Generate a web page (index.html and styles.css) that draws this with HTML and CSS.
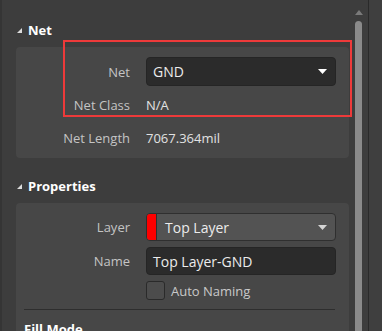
FILE: index.html
```html
<!DOCTYPE html>
<html lang="en">
<head>
  <meta charset="UTF-8">
  <title>Properties</title>
  <link rel="stylesheet" href="styles.css">
</head>
<body>

<div class="panel">
  <div class="main">
    <div class="section-head">
      <svg class="caret" width="5" height="5" viewBox="0 0 5 5"><polygon points="5,0 5,5 0,5"/></svg>
      <span>Net</span>
    </div>
    <div class="card">
      <div class="row">
        <label>Net</label>
        <div class="select dark">
          <span>GND</span>
          <svg class="arrow" width="9" height="5" viewBox="0 0 9 5"><polygon points="0,0 9,0 4.5,5"/></svg>
        </div>
      </div>
      <div class="row">
        <label>Net Class</label>
        <div class="value">N/A</div>
      </div>
      <div class="row">
        <label>Net Length</label>
        <div class="value">7067.364mil</div>
      </div>
    </div>

    <div class="section-head">
      <svg class="caret" width="5" height="5" viewBox="0 0 5 5"><polygon points="5,0 5,5 0,5"/></svg>
      <span>Properties</span>
    </div>
    <div class="card last">
      <div class="row">
        <label>Layer</label>
        <div class="select light">
          <span class="swatch"></span>
          <span class="layer-name">Top Layer</span>
          <svg class="arrow" width="9" height="5" viewBox="0 0 9 5"><polygon points="0,0 9,0 4.5,5"/></svg>
        </div>
      </div>
      <div class="row">
        <label>Name</label>
        <div class="input">Top Layer-GND</div>
      </div>
      <div class="row check-row">
        <label></label>
        <div class="check">
          <span class="box"></span>
          <span>Auto Naming</span>
        </div>
      </div>
      <div class="divider"></div>
      <div class="sub-head">Fill Mode</div>
    </div>
  </div>

  <div class="scroll">
    <svg class="up" width="8" height="5" viewBox="0 0 8 5"><polygon points="4,0 8,5 0,5"/></svg>
    <div class="thumb"></div>
  </div>
  <div class="edge"></div>

  <div class="highlight"></div>
</div>

</body>
</html>
```

FILE: styles.css
```css
* {
  box-sizing: border-box;
}

body {
  margin: 0;
  background: #3d3d3d;
  font-family: "Open Sans", "Noto Sans", sans-serif;
  font-size: 13px;
  color: #c9c9c9;
  overflow: hidden;
}

.panel {
  position: relative;
  display: flex;
  width: 382px;
  height: 331px;
  overflow: hidden;
  border-left: 2px solid #353535;
}

.main {
  width: 347px;
  padding: 20px 0 0 14px;
}

.section-head {
  display: flex;
  align-items: center;
  height: 20px;
  margin-bottom: 7px;
  padding-left: 1px;
  color: #ffffff;
  font-weight: bold;
  font-size: 13px;
}

.caret {
  fill: #dcdcdc;
  margin-right: 6px;
  margin-top: 1px;
}

.card {
  background: #474747;
  border-radius: 4px;
  padding: 10px 7px 6px 0;
  margin-bottom: 18px;
  display: flex;
  flex-direction: column;
  gap: 4px;
}

.card.last {
  margin-bottom: 0;
  padding-bottom: 20px;
  gap: 6px;
}

.row {
  display: grid;
  grid-template-columns: 114px 190px;
  column-gap: 16px;
  align-items: center;
  height: 29px;
}

.card.last .row {
  height: 28px;
}

.card.last .check-row {
  height: 19px;
}

.row label {
  text-align: right;
  color: #c4c4c4;
}

.value {
  color: #e2e2e2;
}

.select,
.input {
  display: flex;
  align-items: center;
  height: 100%;
  border-radius: 4px;
  border: 1px solid #252525;
  color: #ececec;
  font-size: 14px;
}

.select.dark,
.input {
  background: #2b2b2b;
  padding-left: 6px;
}

.select span {
  flex: 1;
}

.arrow {
  fill: #ffffff;
  margin-right: 8px;
}

.select.light {
  background: #535353;
  border-color: #2f2f2f;
  overflow: hidden;
}

.select.light .arrow {
  fill: #d4d4d4;
}

.swatch {
  flex: 0 0 10px !important;
  align-self: stretch;
  background: #ff0000;
  border-right: 1px solid #2f2f2f;
}

.layer-name {
  padding-left: 8px;
}

.check {
  display: flex;
  align-items: center;
  gap: 6px;
  color: #c9c9c9;
}

.box {
  width: 19px;
  height: 19px;
  border: 1px solid #2a2a2a;
  border-radius: 3px;
  background: #4c4c4c;
}

.divider {
  height: 1px;
  background: #2e2e2e;
  margin: 3px 7px 0 8px;
}

.sub-head {
  padding-left: 8px;
  margin-top: 4px;
  color: #ffffff;
  font-weight: bold;
}

.scroll {
  width: 19px;
  display: flex;
  flex-direction: column;
  align-items: center;
  padding-top: 10px;
}

.up {
  fill: #7a7a7a;
  margin-left: 1px;
}

.thumb {
  width: 7px;
  flex: 1;
  margin-top: 6px;
  background: #8a8a8a;
  border-radius: 4px 4px 0 0;
}

.edge {
  flex: 1;
  border-left: 1px solid #2a2a2a;
  background: #3f3f3f;
}

.highlight {
  position: absolute;
  left: 61px;
  top: 40px;
  width: 289px;
  height: 77px;
  border: 2px solid #ee3a3a;
}
```
